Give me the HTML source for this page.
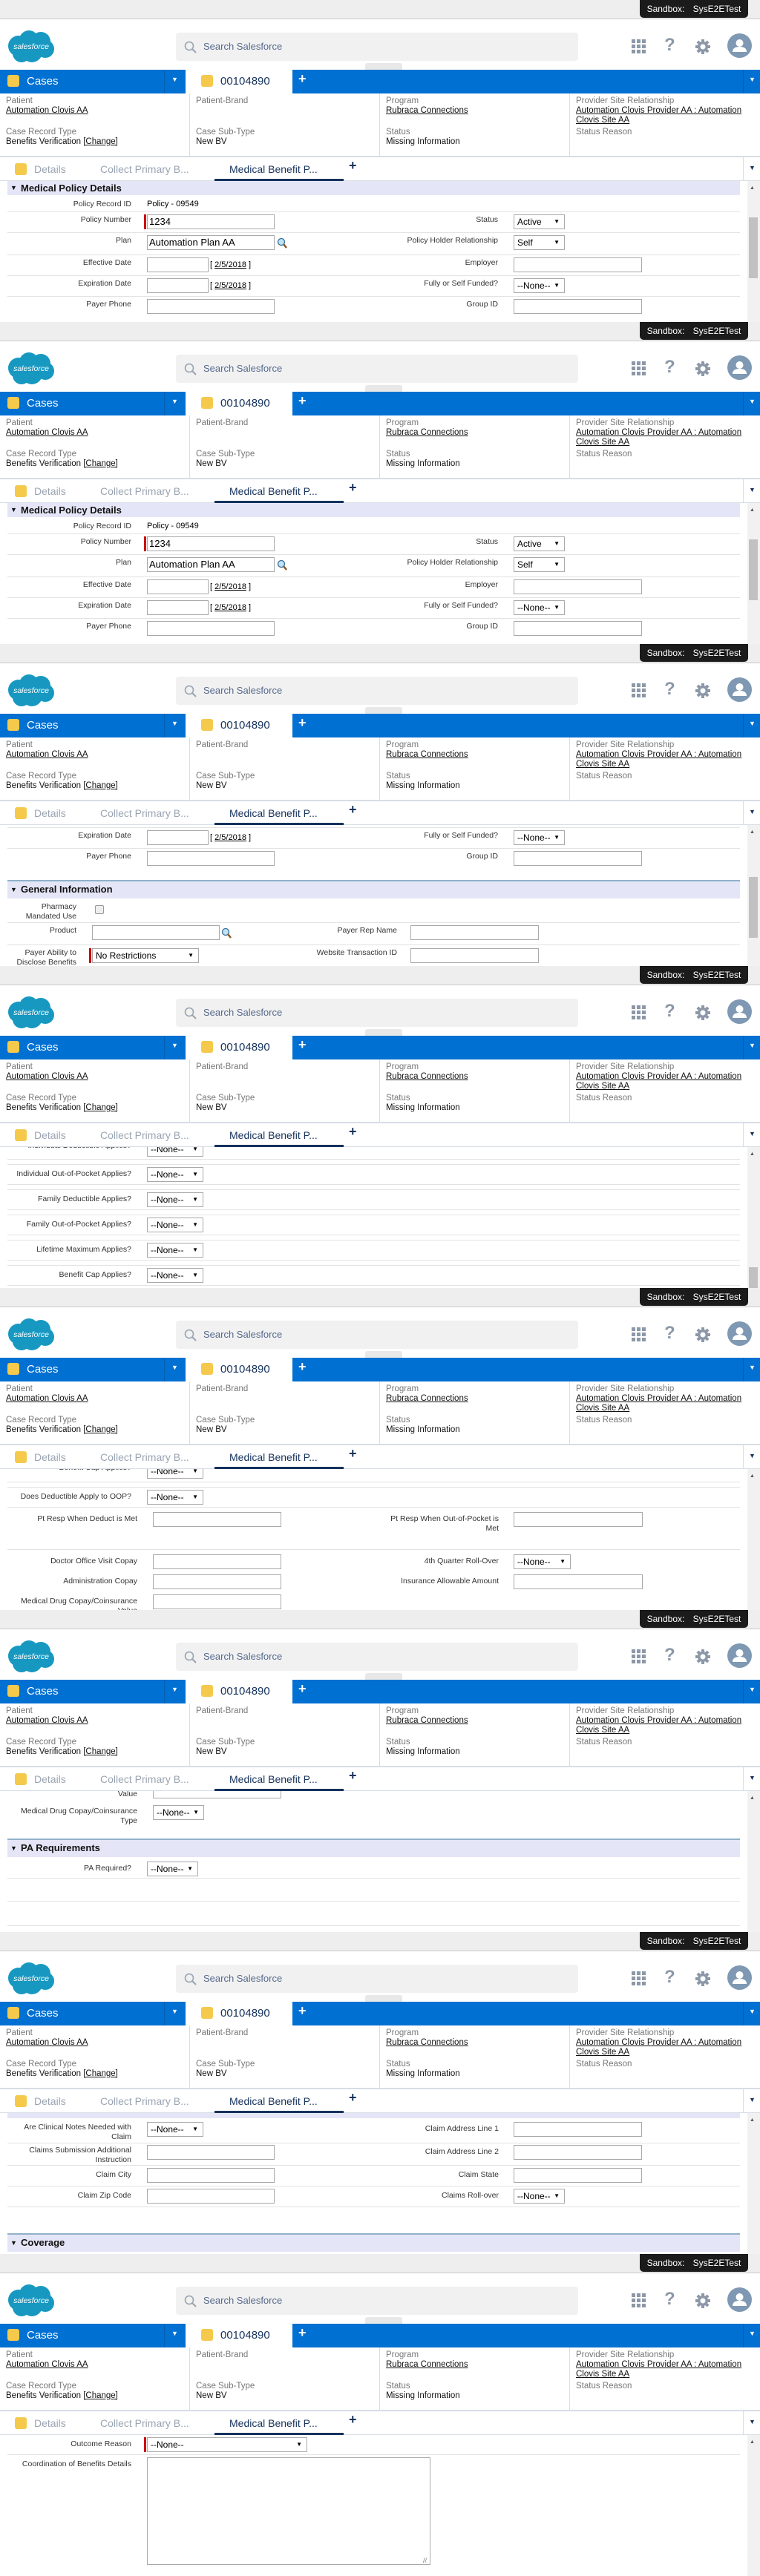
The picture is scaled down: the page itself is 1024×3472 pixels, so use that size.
<!DOCTYPE html>
<html><head><meta charset="utf-8">
<style>
*{box-sizing:border-box;margin:0;padding:0}
body{width:1024px;height:3472px;position:relative;background:#fff;font-family:"Liberation Sans",sans-serif;overflow:hidden}
.f{position:absolute;left:0;width:1024px;height:434px;overflow:hidden;background:#fff}
.a{position:absolute}
.top{position:absolute;left:0;top:0;width:1024px;height:26px;background:#eeeeee;border-bottom:1px solid #c9c9c9}
.sb{position:absolute;left:862px;top:0;width:146px;height:24px;background:#1b1b1b;border-radius:0 0 5px 5px;color:#fff;font-size:12px;line-height:24px;text-align:center;word-spacing:8px}
.srch{position:absolute;left:237px;top:44px;width:542px;height:38px;background:#f1f1f1;border-radius:4px}
.srch span{position:absolute;left:37px;top:11px;font-size:13px;color:#54698d}
.nav{position:absolute;left:0;top:94px;width:1024px;height:32px;background:#0070d2}
.ico{position:absolute;width:16px;height:16px;background:#f4c94c;border-radius:3px}
.rh{position:absolute;left:0;top:126px;width:1024px;height:86px;border-bottom:2px solid #d8dde6}
.rh .l{position:absolute;font-size:11.5px;color:#777}
.rh .v{position:absolute;font-size:11.5px;color:#111}
.rh u{text-decoration:underline}
.tabs{position:absolute;left:0;top:212px;width:1024px;height:32px;border-bottom:1px solid #d8dde6}
.tabs span{position:absolute;top:8px;font-size:14px;color:#9aa4b2}
.c{position:absolute;left:0;top:244px;width:1024px;height:190px;overflow:hidden}
.trk{position:absolute;left:1007px;top:0;width:17px;height:190px;background:#f1f1f1}
.thm{position:absolute;left:1009px;width:12px;background:#c1c1c1}
.up{position:absolute;left:1010px;top:6px;font-size:7px;color:#555}
.lb{position:absolute;font-size:10.5px;color:#333;text-align:right;line-height:13px}
.in{position:absolute;height:20px;border:1px solid #a9a9a9;background:#fff;font-size:13px;line-height:18px;padding-left:2px;color:#000}
.se{position:absolute;height:20px;border:1px solid #a9a9a9;background:#fff;font-size:12px;line-height:18px;padding-left:4px;color:#000}
.se:after{content:"\25BC";position:absolute;right:6px;top:0;font-size:8px}
.ln{position:absolute;left:10px;width:987px;height:1px;background:#e3e3e3}
.sh{position:absolute;left:10px;width:987px;height:25px;background:#e4e6f7;border-top:2px solid #8fb1c9;font-size:13px;font-weight:bold;color:#111;line-height:22px;padding-left:18px}
.sh:before{content:"\25BC";position:absolute;left:4px;top:0;font-size:9px}
.req{position:absolute;width:3px;height:20px;background:#c00}
.dl{position:absolute;font-size:11px;color:#000}
.dl u{text-decoration:underline}
.lk{position:absolute;width:14px;height:16px}
</style></head><body>

<!-- HEADER TEMPLATE repeated -->
<div class="f" style="top:0">
<div class="top"><div class="sb">Sandbox: SysE2ETest</div></div>
<svg class="a" style="left:9px;top:40px" width="66" height="46" viewBox="0 0 66 46"><g fill="#1798c1"><circle cx="16" cy="22" r="14"/><circle cx="30" cy="14" r="13"/><circle cx="46" cy="16" r="13"/><circle cx="52" cy="26" r="12"/><circle cx="34" cy="30" r="14"/><circle cx="20" cy="32" r="12"/></g><text x="33" y="26" fill="#fff" font-size="10.5" text-anchor="middle" font-family="Liberation Sans" font-style="italic">salesforce</text></svg>
<div class="srch"><svg class="a" style="left:11px;top:11px" width="17" height="17"><circle cx="7" cy="7" r="5.5" fill="none" stroke="#9aa4b0" stroke-width="1.6"/><line x1="11" y1="11" x2="16" y2="16" stroke="#9aa4b0" stroke-width="2"/></svg><span>Search Salesforce</span></div>
<div class="a" style="left:492px;top:85px;width:50px;height:9px;background:#e8e8e8;border-radius:3px 3px 0 0"></div>
<svg class="a" style="left:851px;top:53px" width="20" height="20"><g fill="#8c98a8"><rect x="0" y="0" width="5" height="5"/><rect x="7" y="0" width="5" height="5"/><rect x="14" y="0" width="5" height="5"/><rect x="0" y="7" width="5" height="5"/><rect x="7" y="7" width="5" height="5"/><rect x="14" y="7" width="5" height="5"/><rect x="0" y="14" width="5" height="5"/><rect x="7" y="14" width="5" height="5"/><rect x="14" y="14" width="5" height="5"/></g></svg>
<div class="a" style="left:895px;top:47px;font-size:24px;color:#8c98a8;font-weight:bold">?</div>
<svg class="a" style="left:937px;top:53px" width="20" height="20" viewBox="0 0 20 20"><g fill="#8c98a8"><circle cx="10" cy="10" r="7"/><rect x="8" y="0" width="4" height="20"/><rect x="0" y="8" width="20" height="4"/><rect x="8" y="0" width="4" height="20" transform="rotate(45 10 10)"/><rect x="8" y="0" width="4" height="20" transform="rotate(-45 10 10)"/></g><circle cx="10" cy="10" r="3.5" fill="#fff"/></svg>
<svg class="a" style="left:980px;top:45px" width="33" height="33"><circle cx="16.5" cy="16.5" r="16.5" fill="#7f98b3"/><circle cx="16.5" cy="13" r="5" fill="#fff"/><path d="M7 25 Q7 18 16.5 18 Q26 18 26 25 Z" fill="#fff"/></svg>
<div class="nav">
<div class="ico" style="left:10px;top:7px"></div><div class="a" style="left:36px;top:7px;color:#fff;font-size:15px">Cases</div>
<div class="a" style="left:221px;top:0;width:1px;height:32px;background:#005fb2"></div>
<div class="a" style="left:231px;top:8px;color:#fff;font-size:9px">&#9660;</div>
<div class="a" style="left:250px;top:0;width:144px;height:32px;background:#fff"><div class="ico" style="left:21px;top:7px"></div><div class="a" style="left:47px;top:7px;color:#16325c;font-size:15px">00104890</div></div>
<div class="a" style="left:402px;top:2px;color:#fff;font-size:18px;font-weight:bold">+</div>
<div class="a" style="left:1001px;top:0;width:1px;height:32px;background:#005fb2"></div>
<div class="a" style="left:1009px;top:8px;color:#fff;font-size:9px">&#9660;</div>
</div>
<div class="rh">
<div class="a" style="left:255px;top:0;width:1px;height:84px;background:#d8dde6"></div><div class="a" style="left:511px;top:0;width:1px;height:84px;background:#d8dde6"></div><div class="a" style="left:767px;top:0;width:1px;height:84px;background:#d8dde6"></div>
<div class="l" style="left:8px;top:4px">Patient</div><div class="v" style="left:8px;top:17px"><u>Automation Clovis AA</u></div>
<div class="l" style="left:8px;top:46px">Case Record Type</div><div class="v" style="left:8px;top:59px">Benefits Verification <u>[Change]</u></div>
<div class="l" style="left:264px;top:4px">Patient-Brand</div>
<div class="l" style="left:264px;top:46px">Case Sub-Type</div><div class="v" style="left:264px;top:59px">New BV</div>
<div class="l" style="left:520px;top:4px">Program</div><div class="v" style="left:520px;top:17px"><u>Rubraca Connections</u></div>
<div class="l" style="left:520px;top:46px">Status</div><div class="v" style="left:520px;top:59px">Missing Information</div>
<div class="l" style="left:776px;top:4px">Provider Site Relationship</div><div class="v" style="left:776px;top:17px;line-height:13px"><u>Automation Clovis Provider AA : Automation</u><br><u>Clovis Site AA</u></div>
<div class="l" style="left:776px;top:46px">Status Reason</div>
</div>
<div class="tabs">
<div class="ico" style="left:20px;top:8px"></div><span style="left:46px">Details</span><span style="left:135px">Collect Primary B...</span><span style="left:309px;color:#16325c">Medical Benefit P...</span>
<div class="a" style="left:289px;top:29px;width:174px;height:3px;background:#16325c"></div>
<div class="a" style="left:470px;top:1px;color:#16325c;font-size:18px;font-weight:bold">+</div>
<div class="a" style="left:1001px;top:0;width:1px;height:32px;background:#d8dde6"></div>
<div class="a" style="left:1009px;top:9px;color:#16325c;font-size:9px">&#9660;</div>
</div>
<div class="c">
<div class="trk"></div><div class="thm" style="top:49px;height:82px"></div><div class="up">&#9650;</div>
<div class="sh" style="top:0;border-top:0;line-height:19px;height:19px">Medical Policy Details</div>
<div class="lb" style="left:0;width:177px;top:25px">Policy Record ID</div><div class="dl" style="left:198px;top:25px">Policy - 09549</div>
<div class="ln" style="top:41px"></div>
<div class="lb" style="left:0;width:177px;top:46px">Policy Number</div><div class="req" style="left:194px;top:45px"></div><div class="in" style="left:198px;top:45px;width:172px">1234</div>
<div class="lb" style="left:400px;width:271px;top:46px">Status</div><div class="se" style="left:692px;top:45px;width:69px">Active</div>
<div class="ln" style="top:69px"></div>
<div class="lb" style="left:0;width:177px;top:74px">Plan</div><div class="in" style="left:198px;top:73px;width:172px">Automation Plan AA</div><svg class="lk" style="left:373px;top:76px"><circle cx="6" cy="6" r="4.5" fill="#bfe3f5" stroke="#3a6f9a" stroke-width="1.3"/><line x1="9" y1="9" x2="13" y2="14" stroke="#8a5a2a" stroke-width="2.5"/></svg>
<div class="lb" style="left:400px;width:271px;top:74px">Policy Holder Relationship</div><div class="se" style="left:692px;top:73px;width:69px">Self</div>
<div class="ln" style="top:99px"></div>
<div class="lb" style="left:0;width:177px;top:104px">Effective Date</div><div class="in" style="left:198px;top:103px;width:83px"></div><div class="dl" style="left:283px;top:107px">[ <u>2/5/2018</u> ]</div>
<div class="lb" style="left:400px;width:271px;top:104px">Employer</div><div class="in" style="left:692px;top:103px;width:173px"></div>
<div class="ln" style="top:127px"></div>
<div class="lb" style="left:0;width:177px;top:132px">Expiration Date</div><div class="in" style="left:198px;top:131px;width:83px"></div><div class="dl" style="left:283px;top:135px">[ <u>2/5/2018</u> ]</div>
<div class="lb" style="left:400px;width:271px;top:132px">Fully or Self Funded?</div><div class="se" style="left:692px;top:131px;width:69px">--None--</div>
<div class="ln" style="top:155px"></div>
<div class="lb" style="left:0;width:177px;top:160px">Payer Phone</div><div class="in" style="left:198px;top:159px;width:172px"></div>
<div class="lb" style="left:400px;width:271px;top:160px">Group ID</div><div class="in" style="left:692px;top:159px;width:173px"></div>
</div>
</div>

<div class="f" style="top:434px">
<div class="top"><div class="sb">Sandbox: SysE2ETest</div></div>
<svg class="a" style="left:9px;top:40px" width="66" height="46" viewBox="0 0 66 46"><g fill="#1798c1"><circle cx="16" cy="22" r="14"/><circle cx="30" cy="14" r="13"/><circle cx="46" cy="16" r="13"/><circle cx="52" cy="26" r="12"/><circle cx="34" cy="30" r="14"/><circle cx="20" cy="32" r="12"/></g><text x="33" y="26" fill="#fff" font-size="10.5" text-anchor="middle" font-family="Liberation Sans" font-style="italic">salesforce</text></svg>
<div class="srch"><svg class="a" style="left:11px;top:11px" width="17" height="17"><circle cx="7" cy="7" r="5.5" fill="none" stroke="#9aa4b0" stroke-width="1.6"/><line x1="11" y1="11" x2="16" y2="16" stroke="#9aa4b0" stroke-width="2"/></svg><span>Search Salesforce</span></div>
<div class="a" style="left:492px;top:85px;width:50px;height:9px;background:#e8e8e8;border-radius:3px 3px 0 0"></div>
<svg class="a" style="left:851px;top:53px" width="20" height="20"><g fill="#8c98a8"><rect x="0" y="0" width="5" height="5"/><rect x="7" y="0" width="5" height="5"/><rect x="14" y="0" width="5" height="5"/><rect x="0" y="7" width="5" height="5"/><rect x="7" y="7" width="5" height="5"/><rect x="14" y="7" width="5" height="5"/><rect x="0" y="14" width="5" height="5"/><rect x="7" y="14" width="5" height="5"/><rect x="14" y="14" width="5" height="5"/></g></svg>
<div class="a" style="left:895px;top:47px;font-size:24px;color:#8c98a8;font-weight:bold">?</div>
<svg class="a" style="left:937px;top:53px" width="20" height="20" viewBox="0 0 20 20"><g fill="#8c98a8"><circle cx="10" cy="10" r="7"/><rect x="8" y="0" width="4" height="20"/><rect x="0" y="8" width="20" height="4"/><rect x="8" y="0" width="4" height="20" transform="rotate(45 10 10)"/><rect x="8" y="0" width="4" height="20" transform="rotate(-45 10 10)"/></g><circle cx="10" cy="10" r="3.5" fill="#fff"/></svg>
<svg class="a" style="left:980px;top:45px" width="33" height="33"><circle cx="16.5" cy="16.5" r="16.5" fill="#7f98b3"/><circle cx="16.5" cy="13" r="5" fill="#fff"/><path d="M7 25 Q7 18 16.5 18 Q26 18 26 25 Z" fill="#fff"/></svg>
<div class="nav">
<div class="ico" style="left:10px;top:7px"></div><div class="a" style="left:36px;top:7px;color:#fff;font-size:15px">Cases</div>
<div class="a" style="left:221px;top:0;width:1px;height:32px;background:#005fb2"></div>
<div class="a" style="left:231px;top:8px;color:#fff;font-size:9px">&#9660;</div>
<div class="a" style="left:250px;top:0;width:144px;height:32px;background:#fff"><div class="ico" style="left:21px;top:7px"></div><div class="a" style="left:47px;top:7px;color:#16325c;font-size:15px">00104890</div></div>
<div class="a" style="left:402px;top:2px;color:#fff;font-size:18px;font-weight:bold">+</div>
<div class="a" style="left:1001px;top:0;width:1px;height:32px;background:#005fb2"></div>
<div class="a" style="left:1009px;top:8px;color:#fff;font-size:9px">&#9660;</div>
</div>
<div class="rh">
<div class="a" style="left:255px;top:0;width:1px;height:84px;background:#d8dde6"></div><div class="a" style="left:511px;top:0;width:1px;height:84px;background:#d8dde6"></div><div class="a" style="left:767px;top:0;width:1px;height:84px;background:#d8dde6"></div>
<div class="l" style="left:8px;top:4px">Patient</div><div class="v" style="left:8px;top:17px"><u>Automation Clovis AA</u></div>
<div class="l" style="left:8px;top:46px">Case Record Type</div><div class="v" style="left:8px;top:59px">Benefits Verification <u>[Change]</u></div>
<div class="l" style="left:264px;top:4px">Patient-Brand</div>
<div class="l" style="left:264px;top:46px">Case Sub-Type</div><div class="v" style="left:264px;top:59px">New BV</div>
<div class="l" style="left:520px;top:4px">Program</div><div class="v" style="left:520px;top:17px"><u>Rubraca Connections</u></div>
<div class="l" style="left:520px;top:46px">Status</div><div class="v" style="left:520px;top:59px">Missing Information</div>
<div class="l" style="left:776px;top:4px">Provider Site Relationship</div><div class="v" style="left:776px;top:17px;line-height:13px"><u>Automation Clovis Provider AA : Automation</u><br><u>Clovis Site AA</u></div>
<div class="l" style="left:776px;top:46px">Status Reason</div>
</div>
<div class="tabs">
<div class="ico" style="left:20px;top:8px"></div><span style="left:46px">Details</span><span style="left:135px">Collect Primary B...</span><span style="left:309px;color:#16325c">Medical Benefit P...</span>
<div class="a" style="left:289px;top:29px;width:174px;height:3px;background:#16325c"></div>
<div class="a" style="left:470px;top:1px;color:#16325c;font-size:18px;font-weight:bold">+</div>
<div class="a" style="left:1001px;top:0;width:1px;height:32px;background:#d8dde6"></div>
<div class="a" style="left:1009px;top:9px;color:#16325c;font-size:9px">&#9660;</div>
</div>
<div class="c">
<div class="trk"></div><div class="thm" style="top:49px;height:82px"></div><div class="up">&#9650;</div>
<div class="sh" style="top:0;border-top:0;line-height:19px;height:19px">Medical Policy Details</div>
<div class="lb" style="left:0;width:177px;top:25px">Policy Record ID</div><div class="dl" style="left:198px;top:25px">Policy - 09549</div>
<div class="ln" style="top:41px"></div>
<div class="lb" style="left:0;width:177px;top:46px">Policy Number</div><div class="req" style="left:194px;top:45px"></div><div class="in" style="left:198px;top:45px;width:172px">1234</div>
<div class="lb" style="left:400px;width:271px;top:46px">Status</div><div class="se" style="left:692px;top:45px;width:69px">Active</div>
<div class="ln" style="top:69px"></div>
<div class="lb" style="left:0;width:177px;top:74px">Plan</div><div class="in" style="left:198px;top:73px;width:172px">Automation Plan AA</div><svg class="lk" style="left:373px;top:76px"><circle cx="6" cy="6" r="4.5" fill="#bfe3f5" stroke="#3a6f9a" stroke-width="1.3"/><line x1="9" y1="9" x2="13" y2="14" stroke="#8a5a2a" stroke-width="2.5"/></svg>
<div class="lb" style="left:400px;width:271px;top:74px">Policy Holder Relationship</div><div class="se" style="left:692px;top:73px;width:69px">Self</div>
<div class="ln" style="top:99px"></div>
<div class="lb" style="left:0;width:177px;top:104px">Effective Date</div><div class="in" style="left:198px;top:103px;width:83px"></div><div class="dl" style="left:283px;top:107px">[ <u>2/5/2018</u> ]</div>
<div class="lb" style="left:400px;width:271px;top:104px">Employer</div><div class="in" style="left:692px;top:103px;width:173px"></div>
<div class="ln" style="top:127px"></div>
<div class="lb" style="left:0;width:177px;top:132px">Expiration Date</div><div class="in" style="left:198px;top:131px;width:83px"></div><div class="dl" style="left:283px;top:135px">[ <u>2/5/2018</u> ]</div>
<div class="lb" style="left:400px;width:271px;top:132px">Fully or Self Funded?</div><div class="se" style="left:692px;top:131px;width:69px">--None--</div>
<div class="ln" style="top:155px"></div>
<div class="lb" style="left:0;width:177px;top:160px">Payer Phone</div><div class="in" style="left:198px;top:159px;width:172px"></div>
<div class="lb" style="left:400px;width:271px;top:160px">Group ID</div><div class="in" style="left:692px;top:159px;width:173px"></div>
</div>
</div>

<div class="f" style="top:868px">
<div class="top"><div class="sb">Sandbox: SysE2ETest</div></div>
<svg class="a" style="left:9px;top:40px" width="66" height="46" viewBox="0 0 66 46"><g fill="#1798c1"><circle cx="16" cy="22" r="14"/><circle cx="30" cy="14" r="13"/><circle cx="46" cy="16" r="13"/><circle cx="52" cy="26" r="12"/><circle cx="34" cy="30" r="14"/><circle cx="20" cy="32" r="12"/></g><text x="33" y="26" fill="#fff" font-size="10.5" text-anchor="middle" font-family="Liberation Sans" font-style="italic">salesforce</text></svg>
<div class="srch"><svg class="a" style="left:11px;top:11px" width="17" height="17"><circle cx="7" cy="7" r="5.5" fill="none" stroke="#9aa4b0" stroke-width="1.6"/><line x1="11" y1="11" x2="16" y2="16" stroke="#9aa4b0" stroke-width="2"/></svg><span>Search Salesforce</span></div>
<div class="a" style="left:492px;top:85px;width:50px;height:9px;background:#e8e8e8;border-radius:3px 3px 0 0"></div>
<svg class="a" style="left:851px;top:53px" width="20" height="20"><g fill="#8c98a8"><rect x="0" y="0" width="5" height="5"/><rect x="7" y="0" width="5" height="5"/><rect x="14" y="0" width="5" height="5"/><rect x="0" y="7" width="5" height="5"/><rect x="7" y="7" width="5" height="5"/><rect x="14" y="7" width="5" height="5"/><rect x="0" y="14" width="5" height="5"/><rect x="7" y="14" width="5" height="5"/><rect x="14" y="14" width="5" height="5"/></g></svg>
<div class="a" style="left:895px;top:47px;font-size:24px;color:#8c98a8;font-weight:bold">?</div>
<svg class="a" style="left:937px;top:53px" width="20" height="20" viewBox="0 0 20 20"><g fill="#8c98a8"><circle cx="10" cy="10" r="7"/><rect x="8" y="0" width="4" height="20"/><rect x="0" y="8" width="20" height="4"/><rect x="8" y="0" width="4" height="20" transform="rotate(45 10 10)"/><rect x="8" y="0" width="4" height="20" transform="rotate(-45 10 10)"/></g><circle cx="10" cy="10" r="3.5" fill="#fff"/></svg>
<svg class="a" style="left:980px;top:45px" width="33" height="33"><circle cx="16.5" cy="16.5" r="16.5" fill="#7f98b3"/><circle cx="16.5" cy="13" r="5" fill="#fff"/><path d="M7 25 Q7 18 16.5 18 Q26 18 26 25 Z" fill="#fff"/></svg>
<div class="nav">
<div class="ico" style="left:10px;top:7px"></div><div class="a" style="left:36px;top:7px;color:#fff;font-size:15px">Cases</div>
<div class="a" style="left:221px;top:0;width:1px;height:32px;background:#005fb2"></div>
<div class="a" style="left:231px;top:8px;color:#fff;font-size:9px">&#9660;</div>
<div class="a" style="left:250px;top:0;width:144px;height:32px;background:#fff"><div class="ico" style="left:21px;top:7px"></div><div class="a" style="left:47px;top:7px;color:#16325c;font-size:15px">00104890</div></div>
<div class="a" style="left:402px;top:2px;color:#fff;font-size:18px;font-weight:bold">+</div>
<div class="a" style="left:1001px;top:0;width:1px;height:32px;background:#005fb2"></div>
<div class="a" style="left:1009px;top:8px;color:#fff;font-size:9px">&#9660;</div>
</div>
<div class="rh">
<div class="a" style="left:255px;top:0;width:1px;height:84px;background:#d8dde6"></div><div class="a" style="left:511px;top:0;width:1px;height:84px;background:#d8dde6"></div><div class="a" style="left:767px;top:0;width:1px;height:84px;background:#d8dde6"></div>
<div class="l" style="left:8px;top:4px">Patient</div><div class="v" style="left:8px;top:17px"><u>Automation Clovis AA</u></div>
<div class="l" style="left:8px;top:46px">Case Record Type</div><div class="v" style="left:8px;top:59px">Benefits Verification <u>[Change]</u></div>
<div class="l" style="left:264px;top:4px">Patient-Brand</div>
<div class="l" style="left:264px;top:46px">Case Sub-Type</div><div class="v" style="left:264px;top:59px">New BV</div>
<div class="l" style="left:520px;top:4px">Program</div><div class="v" style="left:520px;top:17px"><u>Rubraca Connections</u></div>
<div class="l" style="left:520px;top:46px">Status</div><div class="v" style="left:520px;top:59px">Missing Information</div>
<div class="l" style="left:776px;top:4px">Provider Site Relationship</div><div class="v" style="left:776px;top:17px;line-height:13px"><u>Automation Clovis Provider AA : Automation</u><br><u>Clovis Site AA</u></div>
<div class="l" style="left:776px;top:46px">Status Reason</div>
</div>
<div class="tabs">
<div class="ico" style="left:20px;top:8px"></div><span style="left:46px">Details</span><span style="left:135px">Collect Primary B...</span><span style="left:309px;color:#16325c">Medical Benefit P...</span>
<div class="a" style="left:289px;top:29px;width:174px;height:3px;background:#16325c"></div>
<div class="a" style="left:470px;top:1px;color:#16325c;font-size:18px;font-weight:bold">+</div>
<div class="a" style="left:1001px;top:0;width:1px;height:32px;background:#d8dde6"></div>
<div class="a" style="left:1009px;top:9px;color:#16325c;font-size:9px">&#9660;</div>
</div>
<div class="c">
<div class="trk"></div><div class="thm" style="top:70px;height:82px"></div><div class="up">&#9650;</div>
<div class="ln" style="top:3px"></div>
<div class="lb" style="left:0;width:177px;top:8px">Expiration Date</div><div class="in" style="left:198px;top:7px;width:83px"></div><div class="dl" style="left:283px;top:11px">[ <u>2/5/2018</u> ]</div>
<div class="lb" style="left:400px;width:271px;top:8px">Fully or Self Funded?</div><div class="se" style="left:692px;top:7px;width:69px">--None--</div>
<div class="ln" style="top:31px"></div>
<div class="lb" style="left:0;width:177px;top:36px">Payer Phone</div><div class="in" style="left:198px;top:35px;width:172px"></div>
<div class="lb" style="left:400px;width:271px;top:36px">Group ID</div><div class="in" style="left:692px;top:35px;width:173px"></div>
<div class="sh" style="top:74px">General Information</div>
<div class="lb" style="left:0;width:103px;top:104px">Pharmacy<br>Mandated Use</div><div class="a" style="left:128px;top:108px;width:12px;height:12px;border:1px solid #999;border-radius:2px;background:#eee"></div>
<div class="ln" style="top:131px"></div>
<div class="lb" style="left:0;width:103px;top:136px">Product</div><div class="in" style="left:124px;top:135px;width:172px"></div><svg class="lk" style="left:298px;top:138px"><circle cx="6" cy="6" r="4.5" fill="#bfe3f5" stroke="#3a6f9a" stroke-width="1.3"/><line x1="9" y1="9" x2="13" y2="14" stroke="#8a5a2a" stroke-width="2.5"/></svg>
<div class="lb" style="left:300px;width:235px;top:136px">Payer Rep Name</div><div class="in" style="left:553px;top:135px;width:173px"></div>
<div class="ln" style="top:161px"></div>
<div class="lb" style="left:0;width:103px;top:166px">Payer Ability to<br>Disclose Benefits</div><div class="req" style="left:120px;top:166px"></div><div class="se" style="left:124px;top:166px;width:144px">No Restrictions</div>
<div class="lb" style="left:300px;width:235px;top:166px">Website Transaction ID</div><div class="in" style="left:553px;top:166px;width:173px"></div>
</div>
</div>

<div class="f" style="top:1302px">
<div class="top"><div class="sb">Sandbox: SysE2ETest</div></div>
<svg class="a" style="left:9px;top:40px" width="66" height="46" viewBox="0 0 66 46"><g fill="#1798c1"><circle cx="16" cy="22" r="14"/><circle cx="30" cy="14" r="13"/><circle cx="46" cy="16" r="13"/><circle cx="52" cy="26" r="12"/><circle cx="34" cy="30" r="14"/><circle cx="20" cy="32" r="12"/></g><text x="33" y="26" fill="#fff" font-size="10.5" text-anchor="middle" font-family="Liberation Sans" font-style="italic">salesforce</text></svg>
<div class="srch"><svg class="a" style="left:11px;top:11px" width="17" height="17"><circle cx="7" cy="7" r="5.5" fill="none" stroke="#9aa4b0" stroke-width="1.6"/><line x1="11" y1="11" x2="16" y2="16" stroke="#9aa4b0" stroke-width="2"/></svg><span>Search Salesforce</span></div>
<div class="a" style="left:492px;top:85px;width:50px;height:9px;background:#e8e8e8;border-radius:3px 3px 0 0"></div>
<svg class="a" style="left:851px;top:53px" width="20" height="20"><g fill="#8c98a8"><rect x="0" y="0" width="5" height="5"/><rect x="7" y="0" width="5" height="5"/><rect x="14" y="0" width="5" height="5"/><rect x="0" y="7" width="5" height="5"/><rect x="7" y="7" width="5" height="5"/><rect x="14" y="7" width="5" height="5"/><rect x="0" y="14" width="5" height="5"/><rect x="7" y="14" width="5" height="5"/><rect x="14" y="14" width="5" height="5"/></g></svg>
<div class="a" style="left:895px;top:47px;font-size:24px;color:#8c98a8;font-weight:bold">?</div>
<svg class="a" style="left:937px;top:53px" width="20" height="20" viewBox="0 0 20 20"><g fill="#8c98a8"><circle cx="10" cy="10" r="7"/><rect x="8" y="0" width="4" height="20"/><rect x="0" y="8" width="20" height="4"/><rect x="8" y="0" width="4" height="20" transform="rotate(45 10 10)"/><rect x="8" y="0" width="4" height="20" transform="rotate(-45 10 10)"/></g><circle cx="10" cy="10" r="3.5" fill="#fff"/></svg>
<svg class="a" style="left:980px;top:45px" width="33" height="33"><circle cx="16.5" cy="16.5" r="16.5" fill="#7f98b3"/><circle cx="16.5" cy="13" r="5" fill="#fff"/><path d="M7 25 Q7 18 16.5 18 Q26 18 26 25 Z" fill="#fff"/></svg>
<div class="nav">
<div class="ico" style="left:10px;top:7px"></div><div class="a" style="left:36px;top:7px;color:#fff;font-size:15px">Cases</div>
<div class="a" style="left:221px;top:0;width:1px;height:32px;background:#005fb2"></div>
<div class="a" style="left:231px;top:8px;color:#fff;font-size:9px">&#9660;</div>
<div class="a" style="left:250px;top:0;width:144px;height:32px;background:#fff"><div class="ico" style="left:21px;top:7px"></div><div class="a" style="left:47px;top:7px;color:#16325c;font-size:15px">00104890</div></div>
<div class="a" style="left:402px;top:2px;color:#fff;font-size:18px;font-weight:bold">+</div>
<div class="a" style="left:1001px;top:0;width:1px;height:32px;background:#005fb2"></div>
<div class="a" style="left:1009px;top:8px;color:#fff;font-size:9px">&#9660;</div>
</div>
<div class="rh">
<div class="a" style="left:255px;top:0;width:1px;height:84px;background:#d8dde6"></div><div class="a" style="left:511px;top:0;width:1px;height:84px;background:#d8dde6"></div><div class="a" style="left:767px;top:0;width:1px;height:84px;background:#d8dde6"></div>
<div class="l" style="left:8px;top:4px">Patient</div><div class="v" style="left:8px;top:17px"><u>Automation Clovis AA</u></div>
<div class="l" style="left:8px;top:46px">Case Record Type</div><div class="v" style="left:8px;top:59px">Benefits Verification <u>[Change]</u></div>
<div class="l" style="left:264px;top:4px">Patient-Brand</div>
<div class="l" style="left:264px;top:46px">Case Sub-Type</div><div class="v" style="left:264px;top:59px">New BV</div>
<div class="l" style="left:520px;top:4px">Program</div><div class="v" style="left:520px;top:17px"><u>Rubraca Connections</u></div>
<div class="l" style="left:520px;top:46px">Status</div><div class="v" style="left:520px;top:59px">Missing Information</div>
<div class="l" style="left:776px;top:4px">Provider Site Relationship</div><div class="v" style="left:776px;top:17px;line-height:13px"><u>Automation Clovis Provider AA : Automation</u><br><u>Clovis Site AA</u></div>
<div class="l" style="left:776px;top:46px">Status Reason</div>
</div>
<div class="tabs">
<div class="ico" style="left:20px;top:8px"></div><span style="left:46px">Details</span><span style="left:135px">Collect Primary B...</span><span style="left:309px;color:#16325c">Medical Benefit P...</span>
<div class="a" style="left:289px;top:29px;width:174px;height:3px;background:#16325c"></div>
<div class="a" style="left:470px;top:1px;color:#16325c;font-size:18px;font-weight:bold">+</div>
<div class="a" style="left:1001px;top:0;width:1px;height:32px;background:#d8dde6"></div>
<div class="a" style="left:1009px;top:9px;color:#16325c;font-size:9px">&#9660;</div>
</div>
<div class="c">
<div class="trk"></div><div class="thm" style="top:162px;height:40px"></div><div class="up">&#9650;</div>
<div class="lb" style="left:0;width:177px;top:-8px">Individual Deductible Applies?</div><div class="se" style="left:198px;top:-7px;width:76px">--None--</div>
<div class="ln" style="top:16px"></div><div class="ln" style="top:23px"></div>
<div class="lb" style="left:0;width:177px;top:30px">Individual Out-of-Pocket Applies?</div><div class="se" style="left:198px;top:27px;width:76px">--None--</div>
<div class="ln" style="top:50px"></div><div class="ln" style="top:57px"></div>
<div class="lb" style="left:0;width:177px;top:64px">Family Deductible Applies?</div><div class="se" style="left:198px;top:61px;width:76px">--None--</div>
<div class="ln" style="top:84px"></div><div class="ln" style="top:91px"></div>
<div class="lb" style="left:0;width:177px;top:98px">Family Out-of-Pocket Applies?</div><div class="se" style="left:198px;top:95px;width:76px">--None--</div>
<div class="ln" style="top:118px"></div><div class="ln" style="top:125px"></div>
<div class="lb" style="left:0;width:177px;top:132px">Lifetime Maximum Applies?</div><div class="se" style="left:198px;top:129px;width:76px">--None--</div>
<div class="ln" style="top:152px"></div><div class="ln" style="top:159px"></div>
<div class="lb" style="left:0;width:177px;top:166px">Benefit Cap Applies?</div><div class="se" style="left:198px;top:163px;width:76px">--None--</div>
<div class="ln" style="top:186px"></div>
</div>
</div>

<div class="f" style="top:1736px">
<div class="top"><div class="sb">Sandbox: SysE2ETest</div></div>
<svg class="a" style="left:9px;top:40px" width="66" height="46" viewBox="0 0 66 46"><g fill="#1798c1"><circle cx="16" cy="22" r="14"/><circle cx="30" cy="14" r="13"/><circle cx="46" cy="16" r="13"/><circle cx="52" cy="26" r="12"/><circle cx="34" cy="30" r="14"/><circle cx="20" cy="32" r="12"/></g><text x="33" y="26" fill="#fff" font-size="10.5" text-anchor="middle" font-family="Liberation Sans" font-style="italic">salesforce</text></svg>
<div class="srch"><svg class="a" style="left:11px;top:11px" width="17" height="17"><circle cx="7" cy="7" r="5.5" fill="none" stroke="#9aa4b0" stroke-width="1.6"/><line x1="11" y1="11" x2="16" y2="16" stroke="#9aa4b0" stroke-width="2"/></svg><span>Search Salesforce</span></div>
<div class="a" style="left:492px;top:85px;width:50px;height:9px;background:#e8e8e8;border-radius:3px 3px 0 0"></div>
<svg class="a" style="left:851px;top:53px" width="20" height="20"><g fill="#8c98a8"><rect x="0" y="0" width="5" height="5"/><rect x="7" y="0" width="5" height="5"/><rect x="14" y="0" width="5" height="5"/><rect x="0" y="7" width="5" height="5"/><rect x="7" y="7" width="5" height="5"/><rect x="14" y="7" width="5" height="5"/><rect x="0" y="14" width="5" height="5"/><rect x="7" y="14" width="5" height="5"/><rect x="14" y="14" width="5" height="5"/></g></svg>
<div class="a" style="left:895px;top:47px;font-size:24px;color:#8c98a8;font-weight:bold">?</div>
<svg class="a" style="left:937px;top:53px" width="20" height="20" viewBox="0 0 20 20"><g fill="#8c98a8"><circle cx="10" cy="10" r="7"/><rect x="8" y="0" width="4" height="20"/><rect x="0" y="8" width="20" height="4"/><rect x="8" y="0" width="4" height="20" transform="rotate(45 10 10)"/><rect x="8" y="0" width="4" height="20" transform="rotate(-45 10 10)"/></g><circle cx="10" cy="10" r="3.5" fill="#fff"/></svg>
<svg class="a" style="left:980px;top:45px" width="33" height="33"><circle cx="16.5" cy="16.5" r="16.5" fill="#7f98b3"/><circle cx="16.5" cy="13" r="5" fill="#fff"/><path d="M7 25 Q7 18 16.5 18 Q26 18 26 25 Z" fill="#fff"/></svg>
<div class="nav">
<div class="ico" style="left:10px;top:7px"></div><div class="a" style="left:36px;top:7px;color:#fff;font-size:15px">Cases</div>
<div class="a" style="left:221px;top:0;width:1px;height:32px;background:#005fb2"></div>
<div class="a" style="left:231px;top:8px;color:#fff;font-size:9px">&#9660;</div>
<div class="a" style="left:250px;top:0;width:144px;height:32px;background:#fff"><div class="ico" style="left:21px;top:7px"></div><div class="a" style="left:47px;top:7px;color:#16325c;font-size:15px">00104890</div></div>
<div class="a" style="left:402px;top:2px;color:#fff;font-size:18px;font-weight:bold">+</div>
<div class="a" style="left:1001px;top:0;width:1px;height:32px;background:#005fb2"></div>
<div class="a" style="left:1009px;top:8px;color:#fff;font-size:9px">&#9660;</div>
</div>
<div class="rh">
<div class="a" style="left:255px;top:0;width:1px;height:84px;background:#d8dde6"></div><div class="a" style="left:511px;top:0;width:1px;height:84px;background:#d8dde6"></div><div class="a" style="left:767px;top:0;width:1px;height:84px;background:#d8dde6"></div>
<div class="l" style="left:8px;top:4px">Patient</div><div class="v" style="left:8px;top:17px"><u>Automation Clovis AA</u></div>
<div class="l" style="left:8px;top:46px">Case Record Type</div><div class="v" style="left:8px;top:59px">Benefits Verification <u>[Change]</u></div>
<div class="l" style="left:264px;top:4px">Patient-Brand</div>
<div class="l" style="left:264px;top:46px">Case Sub-Type</div><div class="v" style="left:264px;top:59px">New BV</div>
<div class="l" style="left:520px;top:4px">Program</div><div class="v" style="left:520px;top:17px"><u>Rubraca Connections</u></div>
<div class="l" style="left:520px;top:46px">Status</div><div class="v" style="left:520px;top:59px">Missing Information</div>
<div class="l" style="left:776px;top:4px">Provider Site Relationship</div><div class="v" style="left:776px;top:17px;line-height:13px"><u>Automation Clovis Provider AA : Automation</u><br><u>Clovis Site AA</u></div>
<div class="l" style="left:776px;top:46px">Status Reason</div>
</div>
<div class="tabs">
<div class="ico" style="left:20px;top:8px"></div><span style="left:46px">Details</span><span style="left:135px">Collect Primary B...</span><span style="left:309px;color:#16325c">Medical Benefit P...</span>
<div class="a" style="left:289px;top:29px;width:174px;height:3px;background:#16325c"></div>
<div class="a" style="left:470px;top:1px;color:#16325c;font-size:18px;font-weight:bold">+</div>
<div class="a" style="left:1001px;top:0;width:1px;height:32px;background:#d8dde6"></div>
<div class="a" style="left:1009px;top:9px;color:#16325c;font-size:9px">&#9660;</div>
</div>
<div class="c">
<div class="trk"></div><div class="up">&#9650;</div>
<div class="lb" style="left:0;width:177px;top:-8px">Benefit Cap Applies?</div><div class="se" style="left:198px;top:-7px;width:76px">--None--</div>
<div class="ln" style="top:17px"></div><div class="ln" style="top:24px"></div>
<div class="lb" style="left:0;width:177px;top:31px">Does Deductible Apply to OOP?</div><div class="se" style="left:198px;top:28px;width:76px">--None--</div>
<div class="ln" style="top:51px"></div>
<div class="lb" style="left:0;width:185px;top:61px">Pt Resp When Deduct is Met</div><div class="in" style="left:206px;top:58px;width:173px"></div>
<div class="lb" style="left:500px;width:172px;top:61px">Pt Resp When Out-of-Pocket is<br>Met</div><div class="in" style="left:692px;top:58px;width:174px"></div>
<div class="ln" style="top:108px"></div>
<div class="lb" style="left:0;width:185px;top:118px">Doctor Office Visit Copay</div><div class="in" style="left:206px;top:115px;width:173px"></div>
<div class="lb" style="left:500px;width:172px;top:118px">4th Quarter Roll-Over</div><div class="se" style="left:692px;top:115px;width:77px">--None--</div>
<div class="lb" style="left:0;width:185px;top:145px">Administration Copay</div><div class="in" style="left:206px;top:142px;width:173px"></div>
<div class="lb" style="left:500px;width:172px;top:145px">Insurance Allowable Amount</div><div class="in" style="left:692px;top:142px;width:174px"></div>
<div class="lb" style="left:0;width:185px;top:172px">Medical Drug Copay/Coinsurance<br>Value</div><div class="in" style="left:206px;top:169px;width:173px"></div>
</div>
</div>

<div class="f" style="top:2170px">
<div class="top"><div class="sb">Sandbox: SysE2ETest</div></div>
<svg class="a" style="left:9px;top:40px" width="66" height="46" viewBox="0 0 66 46"><g fill="#1798c1"><circle cx="16" cy="22" r="14"/><circle cx="30" cy="14" r="13"/><circle cx="46" cy="16" r="13"/><circle cx="52" cy="26" r="12"/><circle cx="34" cy="30" r="14"/><circle cx="20" cy="32" r="12"/></g><text x="33" y="26" fill="#fff" font-size="10.5" text-anchor="middle" font-family="Liberation Sans" font-style="italic">salesforce</text></svg>
<div class="srch"><svg class="a" style="left:11px;top:11px" width="17" height="17"><circle cx="7" cy="7" r="5.5" fill="none" stroke="#9aa4b0" stroke-width="1.6"/><line x1="11" y1="11" x2="16" y2="16" stroke="#9aa4b0" stroke-width="2"/></svg><span>Search Salesforce</span></div>
<div class="a" style="left:492px;top:85px;width:50px;height:9px;background:#e8e8e8;border-radius:3px 3px 0 0"></div>
<svg class="a" style="left:851px;top:53px" width="20" height="20"><g fill="#8c98a8"><rect x="0" y="0" width="5" height="5"/><rect x="7" y="0" width="5" height="5"/><rect x="14" y="0" width="5" height="5"/><rect x="0" y="7" width="5" height="5"/><rect x="7" y="7" width="5" height="5"/><rect x="14" y="7" width="5" height="5"/><rect x="0" y="14" width="5" height="5"/><rect x="7" y="14" width="5" height="5"/><rect x="14" y="14" width="5" height="5"/></g></svg>
<div class="a" style="left:895px;top:47px;font-size:24px;color:#8c98a8;font-weight:bold">?</div>
<svg class="a" style="left:937px;top:53px" width="20" height="20" viewBox="0 0 20 20"><g fill="#8c98a8"><circle cx="10" cy="10" r="7"/><rect x="8" y="0" width="4" height="20"/><rect x="0" y="8" width="20" height="4"/><rect x="8" y="0" width="4" height="20" transform="rotate(45 10 10)"/><rect x="8" y="0" width="4" height="20" transform="rotate(-45 10 10)"/></g><circle cx="10" cy="10" r="3.5" fill="#fff"/></svg>
<svg class="a" style="left:980px;top:45px" width="33" height="33"><circle cx="16.5" cy="16.5" r="16.5" fill="#7f98b3"/><circle cx="16.5" cy="13" r="5" fill="#fff"/><path d="M7 25 Q7 18 16.5 18 Q26 18 26 25 Z" fill="#fff"/></svg>
<div class="nav">
<div class="ico" style="left:10px;top:7px"></div><div class="a" style="left:36px;top:7px;color:#fff;font-size:15px">Cases</div>
<div class="a" style="left:221px;top:0;width:1px;height:32px;background:#005fb2"></div>
<div class="a" style="left:231px;top:8px;color:#fff;font-size:9px">&#9660;</div>
<div class="a" style="left:250px;top:0;width:144px;height:32px;background:#fff"><div class="ico" style="left:21px;top:7px"></div><div class="a" style="left:47px;top:7px;color:#16325c;font-size:15px">00104890</div></div>
<div class="a" style="left:402px;top:2px;color:#fff;font-size:18px;font-weight:bold">+</div>
<div class="a" style="left:1001px;top:0;width:1px;height:32px;background:#005fb2"></div>
<div class="a" style="left:1009px;top:8px;color:#fff;font-size:9px">&#9660;</div>
</div>
<div class="rh">
<div class="a" style="left:255px;top:0;width:1px;height:84px;background:#d8dde6"></div><div class="a" style="left:511px;top:0;width:1px;height:84px;background:#d8dde6"></div><div class="a" style="left:767px;top:0;width:1px;height:84px;background:#d8dde6"></div>
<div class="l" style="left:8px;top:4px">Patient</div><div class="v" style="left:8px;top:17px"><u>Automation Clovis AA</u></div>
<div class="l" style="left:8px;top:46px">Case Record Type</div><div class="v" style="left:8px;top:59px">Benefits Verification <u>[Change]</u></div>
<div class="l" style="left:264px;top:4px">Patient-Brand</div>
<div class="l" style="left:264px;top:46px">Case Sub-Type</div><div class="v" style="left:264px;top:59px">New BV</div>
<div class="l" style="left:520px;top:4px">Program</div><div class="v" style="left:520px;top:17px"><u>Rubraca Connections</u></div>
<div class="l" style="left:520px;top:46px">Status</div><div class="v" style="left:520px;top:59px">Missing Information</div>
<div class="l" style="left:776px;top:4px">Provider Site Relationship</div><div class="v" style="left:776px;top:17px;line-height:13px"><u>Automation Clovis Provider AA : Automation</u><br><u>Clovis Site AA</u></div>
<div class="l" style="left:776px;top:46px">Status Reason</div>
</div>
<div class="tabs">
<div class="ico" style="left:20px;top:8px"></div><span style="left:46px">Details</span><span style="left:135px">Collect Primary B...</span><span style="left:309px;color:#16325c">Medical Benefit P...</span>
<div class="a" style="left:289px;top:29px;width:174px;height:3px;background:#16325c"></div>
<div class="a" style="left:470px;top:1px;color:#16325c;font-size:18px;font-weight:bold">+</div>
<div class="a" style="left:1001px;top:0;width:1px;height:32px;background:#d8dde6"></div>
<div class="a" style="left:1009px;top:9px;color:#16325c;font-size:9px">&#9660;</div>
</div>
<div class="c">
<div class="trk"></div><div class="up">&#9650;</div>
<div class="lb" style="left:0;width:185px;top:-2px">Value</div><div class="in" style="left:206px;top:-10px;width:173px"></div>
<div class="lb" style="left:0;width:185px;top:21px">Medical Drug Copay/Coinsurance<br>Type</div><div class="se" style="left:206px;top:19px;width:69px">--None--</div>
<div class="sh" style="top:64px">PA Requirements</div>
<div class="lb" style="left:0;width:177px;top:98px">PA Required?</div><div class="se" style="left:198px;top:95px;width:69px">--None--</div>
<div class="ln" style="top:117px"></div><div class="ln" style="top:148px"></div><div class="ln" style="top:181px"></div>
</div>
</div>

<div class="f" style="top:2604px">
<div class="top"><div class="sb">Sandbox: SysE2ETest</div></div>
<svg class="a" style="left:9px;top:40px" width="66" height="46" viewBox="0 0 66 46"><g fill="#1798c1"><circle cx="16" cy="22" r="14"/><circle cx="30" cy="14" r="13"/><circle cx="46" cy="16" r="13"/><circle cx="52" cy="26" r="12"/><circle cx="34" cy="30" r="14"/><circle cx="20" cy="32" r="12"/></g><text x="33" y="26" fill="#fff" font-size="10.5" text-anchor="middle" font-family="Liberation Sans" font-style="italic">salesforce</text></svg>
<div class="srch"><svg class="a" style="left:11px;top:11px" width="17" height="17"><circle cx="7" cy="7" r="5.5" fill="none" stroke="#9aa4b0" stroke-width="1.6"/><line x1="11" y1="11" x2="16" y2="16" stroke="#9aa4b0" stroke-width="2"/></svg><span>Search Salesforce</span></div>
<div class="a" style="left:492px;top:85px;width:50px;height:9px;background:#e8e8e8;border-radius:3px 3px 0 0"></div>
<svg class="a" style="left:851px;top:53px" width="20" height="20"><g fill="#8c98a8"><rect x="0" y="0" width="5" height="5"/><rect x="7" y="0" width="5" height="5"/><rect x="14" y="0" width="5" height="5"/><rect x="0" y="7" width="5" height="5"/><rect x="7" y="7" width="5" height="5"/><rect x="14" y="7" width="5" height="5"/><rect x="0" y="14" width="5" height="5"/><rect x="7" y="14" width="5" height="5"/><rect x="14" y="14" width="5" height="5"/></g></svg>
<div class="a" style="left:895px;top:47px;font-size:24px;color:#8c98a8;font-weight:bold">?</div>
<svg class="a" style="left:937px;top:53px" width="20" height="20" viewBox="0 0 20 20"><g fill="#8c98a8"><circle cx="10" cy="10" r="7"/><rect x="8" y="0" width="4" height="20"/><rect x="0" y="8" width="20" height="4"/><rect x="8" y="0" width="4" height="20" transform="rotate(45 10 10)"/><rect x="8" y="0" width="4" height="20" transform="rotate(-45 10 10)"/></g><circle cx="10" cy="10" r="3.5" fill="#fff"/></svg>
<svg class="a" style="left:980px;top:45px" width="33" height="33"><circle cx="16.5" cy="16.5" r="16.5" fill="#7f98b3"/><circle cx="16.5" cy="13" r="5" fill="#fff"/><path d="M7 25 Q7 18 16.5 18 Q26 18 26 25 Z" fill="#fff"/></svg>
<div class="nav">
<div class="ico" style="left:10px;top:7px"></div><div class="a" style="left:36px;top:7px;color:#fff;font-size:15px">Cases</div>
<div class="a" style="left:221px;top:0;width:1px;height:32px;background:#005fb2"></div>
<div class="a" style="left:231px;top:8px;color:#fff;font-size:9px">&#9660;</div>
<div class="a" style="left:250px;top:0;width:144px;height:32px;background:#fff"><div class="ico" style="left:21px;top:7px"></div><div class="a" style="left:47px;top:7px;color:#16325c;font-size:15px">00104890</div></div>
<div class="a" style="left:402px;top:2px;color:#fff;font-size:18px;font-weight:bold">+</div>
<div class="a" style="left:1001px;top:0;width:1px;height:32px;background:#005fb2"></div>
<div class="a" style="left:1009px;top:8px;color:#fff;font-size:9px">&#9660;</div>
</div>
<div class="rh">
<div class="a" style="left:255px;top:0;width:1px;height:84px;background:#d8dde6"></div><div class="a" style="left:511px;top:0;width:1px;height:84px;background:#d8dde6"></div><div class="a" style="left:767px;top:0;width:1px;height:84px;background:#d8dde6"></div>
<div class="l" style="left:8px;top:4px">Patient</div><div class="v" style="left:8px;top:17px"><u>Automation Clovis AA</u></div>
<div class="l" style="left:8px;top:46px">Case Record Type</div><div class="v" style="left:8px;top:59px">Benefits Verification <u>[Change]</u></div>
<div class="l" style="left:264px;top:4px">Patient-Brand</div>
<div class="l" style="left:264px;top:46px">Case Sub-Type</div><div class="v" style="left:264px;top:59px">New BV</div>
<div class="l" style="left:520px;top:4px">Program</div><div class="v" style="left:520px;top:17px"><u>Rubraca Connections</u></div>
<div class="l" style="left:520px;top:46px">Status</div><div class="v" style="left:520px;top:59px">Missing Information</div>
<div class="l" style="left:776px;top:4px">Provider Site Relationship</div><div class="v" style="left:776px;top:17px;line-height:13px"><u>Automation Clovis Provider AA : Automation</u><br><u>Clovis Site AA</u></div>
<div class="l" style="left:776px;top:46px">Status Reason</div>
</div>
<div class="tabs">
<div class="ico" style="left:20px;top:8px"></div><span style="left:46px">Details</span><span style="left:135px">Collect Primary B...</span><span style="left:309px;color:#16325c">Medical Benefit P...</span>
<div class="a" style="left:289px;top:29px;width:174px;height:3px;background:#16325c"></div>
<div class="a" style="left:470px;top:1px;color:#16325c;font-size:18px;font-weight:bold">+</div>
<div class="a" style="left:1001px;top:0;width:1px;height:32px;background:#d8dde6"></div>
<div class="a" style="left:1009px;top:9px;color:#16325c;font-size:9px">&#9660;</div>
</div>
<div class="c">
<div class="trk"></div><div class="up">&#9650;</div>
<div class="a" style="left:10px;top:0;width:987px;height:7px;background:#e4e6f7"></div>
<div class="lb" style="left:0;width:177px;top:13px">Are Clinical Notes Needed with<br>Claim</div><div class="se" style="left:198px;top:12px;width:76px">--None--</div>
<div class="lb" style="left:400px;width:272px;top:15px">Claim Address Line 1</div><div class="in" style="left:692px;top:12px;width:173px"></div>
<div class="ln" style="top:40px"></div>
<div class="lb" style="left:0;width:177px;top:44px">Claims Submission Additional<br>Instruction</div><div class="in" style="left:198px;top:43px;width:172px"></div>
<div class="lb" style="left:400px;width:272px;top:46px">Claim Address Line 2</div><div class="in" style="left:692px;top:43px;width:173px"></div>
<div class="ln" style="top:70px"></div>
<div class="lb" style="left:0;width:177px;top:77px">Claim City</div><div class="in" style="left:198px;top:74px;width:172px"></div>
<div class="lb" style="left:400px;width:272px;top:77px">Claim State</div><div class="in" style="left:692px;top:74px;width:173px"></div>
<div class="ln" style="top:98px"></div>
<div class="lb" style="left:0;width:177px;top:105px">Claim Zip Code</div><div class="in" style="left:198px;top:102px;width:172px"></div>
<div class="lb" style="left:400px;width:272px;top:105px">Claims Roll-over</div><div class="se" style="left:692px;top:102px;width:69px">--None--</div>
<div class="ln" style="top:126px"></div>
<div class="sh" style="top:162px">Coverage</div>
</div>
</div>

<div class="f" style="top:3038px">
<div class="top"><div class="sb">Sandbox: SysE2ETest</div></div>
<svg class="a" style="left:9px;top:40px" width="66" height="46" viewBox="0 0 66 46"><g fill="#1798c1"><circle cx="16" cy="22" r="14"/><circle cx="30" cy="14" r="13"/><circle cx="46" cy="16" r="13"/><circle cx="52" cy="26" r="12"/><circle cx="34" cy="30" r="14"/><circle cx="20" cy="32" r="12"/></g><text x="33" y="26" fill="#fff" font-size="10.5" text-anchor="middle" font-family="Liberation Sans" font-style="italic">salesforce</text></svg>
<div class="srch"><svg class="a" style="left:11px;top:11px" width="17" height="17"><circle cx="7" cy="7" r="5.5" fill="none" stroke="#9aa4b0" stroke-width="1.6"/><line x1="11" y1="11" x2="16" y2="16" stroke="#9aa4b0" stroke-width="2"/></svg><span>Search Salesforce</span></div>
<div class="a" style="left:492px;top:85px;width:50px;height:9px;background:#e8e8e8;border-radius:3px 3px 0 0"></div>
<svg class="a" style="left:851px;top:53px" width="20" height="20"><g fill="#8c98a8"><rect x="0" y="0" width="5" height="5"/><rect x="7" y="0" width="5" height="5"/><rect x="14" y="0" width="5" height="5"/><rect x="0" y="7" width="5" height="5"/><rect x="7" y="7" width="5" height="5"/><rect x="14" y="7" width="5" height="5"/><rect x="0" y="14" width="5" height="5"/><rect x="7" y="14" width="5" height="5"/><rect x="14" y="14" width="5" height="5"/></g></svg>
<div class="a" style="left:895px;top:47px;font-size:24px;color:#8c98a8;font-weight:bold">?</div>
<svg class="a" style="left:937px;top:53px" width="20" height="20" viewBox="0 0 20 20"><g fill="#8c98a8"><circle cx="10" cy="10" r="7"/><rect x="8" y="0" width="4" height="20"/><rect x="0" y="8" width="20" height="4"/><rect x="8" y="0" width="4" height="20" transform="rotate(45 10 10)"/><rect x="8" y="0" width="4" height="20" transform="rotate(-45 10 10)"/></g><circle cx="10" cy="10" r="3.5" fill="#fff"/></svg>
<svg class="a" style="left:980px;top:45px" width="33" height="33"><circle cx="16.5" cy="16.5" r="16.5" fill="#7f98b3"/><circle cx="16.5" cy="13" r="5" fill="#fff"/><path d="M7 25 Q7 18 16.5 18 Q26 18 26 25 Z" fill="#fff"/></svg>
<div class="nav">
<div class="ico" style="left:10px;top:7px"></div><div class="a" style="left:36px;top:7px;color:#fff;font-size:15px">Cases</div>
<div class="a" style="left:221px;top:0;width:1px;height:32px;background:#005fb2"></div>
<div class="a" style="left:231px;top:8px;color:#fff;font-size:9px">&#9660;</div>
<div class="a" style="left:250px;top:0;width:144px;height:32px;background:#fff"><div class="ico" style="left:21px;top:7px"></div><div class="a" style="left:47px;top:7px;color:#16325c;font-size:15px">00104890</div></div>
<div class="a" style="left:402px;top:2px;color:#fff;font-size:18px;font-weight:bold">+</div>
<div class="a" style="left:1001px;top:0;width:1px;height:32px;background:#005fb2"></div>
<div class="a" style="left:1009px;top:8px;color:#fff;font-size:9px">&#9660;</div>
</div>
<div class="rh">
<div class="a" style="left:255px;top:0;width:1px;height:84px;background:#d8dde6"></div><div class="a" style="left:511px;top:0;width:1px;height:84px;background:#d8dde6"></div><div class="a" style="left:767px;top:0;width:1px;height:84px;background:#d8dde6"></div>
<div class="l" style="left:8px;top:4px">Patient</div><div class="v" style="left:8px;top:17px"><u>Automation Clovis AA</u></div>
<div class="l" style="left:8px;top:46px">Case Record Type</div><div class="v" style="left:8px;top:59px">Benefits Verification <u>[Change]</u></div>
<div class="l" style="left:264px;top:4px">Patient-Brand</div>
<div class="l" style="left:264px;top:46px">Case Sub-Type</div><div class="v" style="left:264px;top:59px">New BV</div>
<div class="l" style="left:520px;top:4px">Program</div><div class="v" style="left:520px;top:17px"><u>Rubraca Connections</u></div>
<div class="l" style="left:520px;top:46px">Status</div><div class="v" style="left:520px;top:59px">Missing Information</div>
<div class="l" style="left:776px;top:4px">Provider Site Relationship</div><div class="v" style="left:776px;top:17px;line-height:13px"><u>Automation Clovis Provider AA : Automation</u><br><u>Clovis Site AA</u></div>
<div class="l" style="left:776px;top:46px">Status Reason</div>
</div>
<div class="tabs">
<div class="ico" style="left:20px;top:8px"></div><span style="left:46px">Details</span><span style="left:135px">Collect Primary B...</span><span style="left:309px;color:#16325c">Medical Benefit P...</span>
<div class="a" style="left:289px;top:29px;width:174px;height:3px;background:#16325c"></div>
<div class="a" style="left:470px;top:1px;color:#16325c;font-size:18px;font-weight:bold">+</div>
<div class="a" style="left:1001px;top:0;width:1px;height:32px;background:#d8dde6"></div>
<div class="a" style="left:1009px;top:9px;color:#16325c;font-size:9px">&#9660;</div>
</div>
<div class="c">
<div class="trk"></div><div class="up">&#9650;</div>
<div class="lb" style="left:0;width:177px;top:6px">Outcome Reason</div><div class="req" style="left:194px;top:3px"></div><div class="se" style="left:198px;top:3px;width:216px">--None--</div>
<div class="ln" style="top:26px"></div>
<div class="lb" style="left:0;width:177px;top:33px">Coordination of Benefits Details</div><div class="a" style="left:198px;top:30px;width:382px;height:145px;border:1px solid #a9a9a9"></div>
<div class="a" style="left:570px;top:164px;font-size:9px;color:#777">//</div>
</div>
</div>

</body></html>
